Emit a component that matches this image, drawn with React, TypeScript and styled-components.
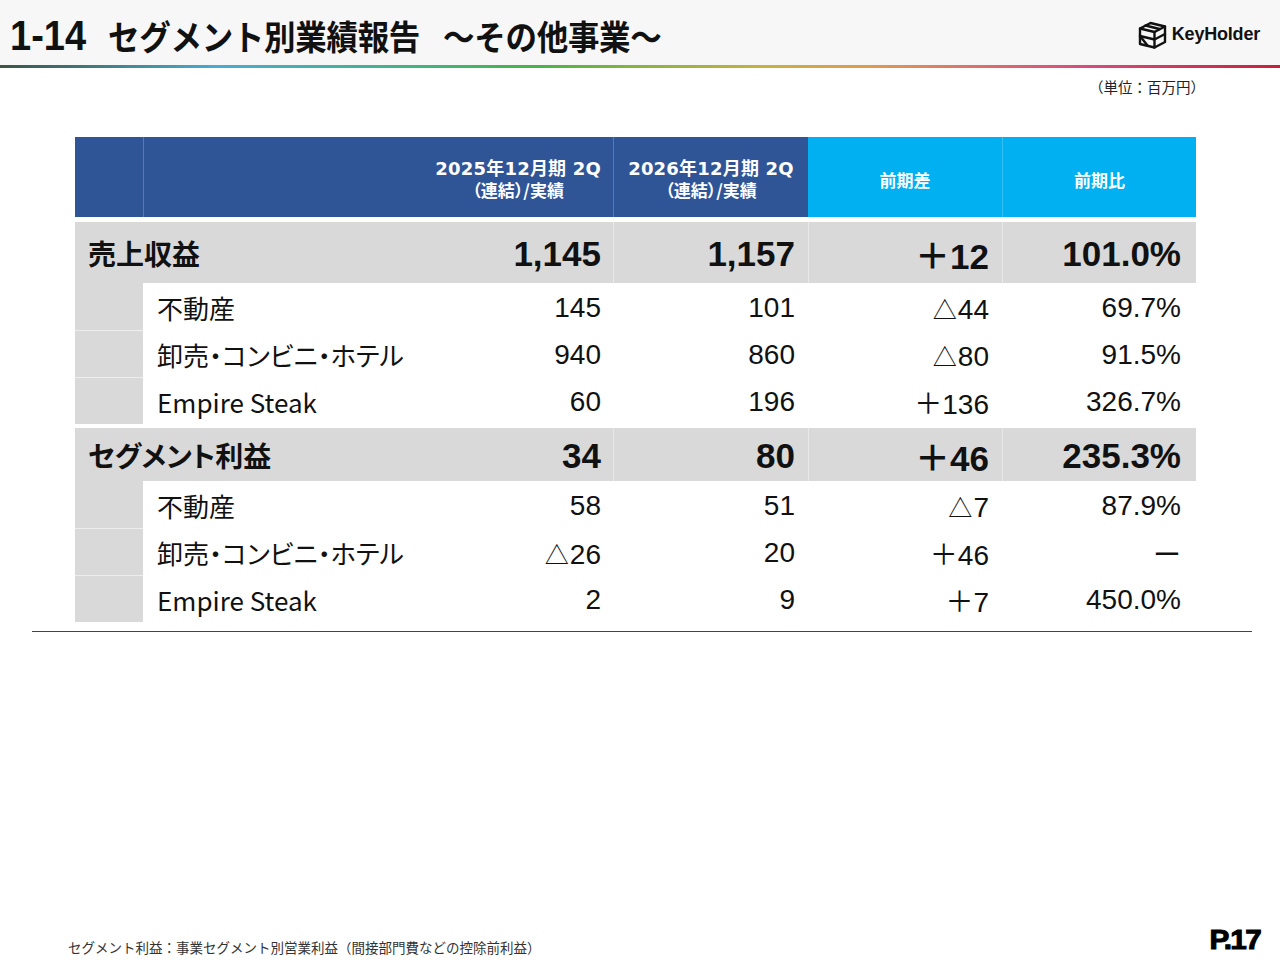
import React from "react";
import styled, { createGlobalStyle } from "styled-components";

const GlobalStyle = createGlobalStyle`
  html, body { margin: 0; padding: 0; background: #ffffff; }
  body { font-family: "Noto Sans CJK JP", "Noto Sans", sans-serif; color: #000; }
  * { box-sizing: border-box; }
`;

const COLS = "68px 470px 195px 194px 194px";
const NUM_FONT = `"Liberation Sans", Arial, "Noto Sans CJK JP", sans-serif`;
const JP_FONT = `"Noto Sans CJK JP", "Noto Sans", sans-serif`;

const Page = styled.div`
  width: 1280px;
  height: 960px;
  display: flex;
  flex-direction: column;
  background: #ffffff;
  overflow: hidden;
`;

const Header = styled.header`
  height: 65px;
  background: #f7f7f7;
  display: flex;
  align-items: center;
  justify-content: space-between;
  padding: 0 20px 0 10px;
`;

const Title = styled.h1`
  margin: 0;
  display: flex;
  align-items: baseline;
  font-family: ${JP_FONT};
  font-weight: 700;
  font-size: 31.5px;
  letter-spacing: -0.3px;
  line-height: 1;
  padding-top: 4px;
  white-space: pre;
  color: #111;
  transform: scaleY(1.1);
  transform-origin: left center;
`;

const TitleNum = styled.span`
  font-family: ${NUM_FONT};
  font-size: 38px;
  letter-spacing: 0;
  margin-right: 22px;
`;

const TitleSub = styled.span`
  margin-left: 23px;
`;

const Logo = styled.div`
  display: flex;
  align-items: center;
  gap: 4px;
  padding-top: 4px;
`;

const LogoText = styled.span`
  font-family: ${NUM_FONT};
  font-weight: 700;
  font-size: 18px;
  letter-spacing: -0.2px;
  color: #111;
`;

const GradientBar = styled.div`
  height: 3px;
  background: linear-gradient(
    to right,
    #3b5545 0%,
    #47acd2 17%,
    #3fb3a0 27%,
    #46b446 42%,
    #8ab43e 50%,
    #c9b040 60%,
    #e09a50 68%,
    #e0706a 76%,
    #d94a7c 85%,
    #c8203a 100%
  );
`;

const Content = styled.main`
  display: flex;
  flex-direction: column;
  padding: 0 28px 0 32px;
`;

const Unit = styled.div`
  align-self: flex-end;
  margin: 10px 47px 0 0;
  font-family: ${JP_FONT};
  font-size: 14.5px;
  line-height: 18px;
  color: #222;
`;

const Table = styled.div`
  margin: 41px 56px 0 43px;
  display: flex;
  flex-direction: column;
`;

const Row = styled.div<{ $h: number; $gap?: number }>`
  display: grid;
  grid-template-columns: ${COLS};
  height: ${(p) => p.$h}px;
  margin-top: ${(p) => p.$gap ?? 0}px;
`;

const HeadCell = styled.div<{ $tone: "dark" | "light"; $align?: "center" | "end"; $first?: boolean }>`
  background: ${(p) => (p.$tone === "dark" ? "#2f5597" : "#00b0f0")};
  border-left: ${(p) =>
    p.$first ? "none" : p.$tone === "dark" ? "1px solid #5a78b0" : "1px solid #33c0f3"};
  color: #ffffff;
  display: flex;
  flex-direction: column;
  align-items: ${(p) => (p.$align === "end" ? "flex-end" : "center")};
  justify-content: center;
  padding: 5px ${(p) => (p.$align === "end" ? "12px" : "0")} 0 0;
  font-family: ${JP_FONT};
  font-weight: 700;
  font-size: 17px;
  line-height: 20px;
  text-align: center;
  font-feature-settings: "palt";
`;

const HeadStack = styled.div`
  display: flex;
  flex-direction: column;
  align-items: center;
  gap: 1px;
  margin-top: -2px;
`;

const HeadDate = styled.span`
  display: block;
  font-family: "DejaVu Sans", "Noto Sans CJK JP", sans-serif;
  font-size: 18px;
  line-height: 20px;
  letter-spacing: 0.2px;
`;

const HeadSub = styled.span`
  display: block;
  font-size: 17px;
  line-height: 19px;
`;

const MainCell = styled.div<{ $pr: number; $lead?: boolean }>`
  grid-column: ${(p) => (p.$lead ? "span 2" : "auto")};
  background: #d9d9d9;
  border-left: ${(p) => (p.$lead ? "none" : "1px solid #e8e8e8")};
  display: flex;
  align-items: center;
  justify-content: ${(p) => (p.$lead ? "space-between" : "flex-end")};
  padding: 2px ${(p) => p.$pr}px 0 ${(p) => (p.$lead ? 13 : 0)}px;
`;

const MainLabel = styled.span`
  font-family: ${JP_FONT};
  font-weight: 700;
  font-size: 28px;
  color: #111;
  font-feature-settings: "palt";
  margin-top: -2px;
`;

const MainNum = styled.span`
  font-family: ${NUM_FONT};
  font-weight: 700;
  font-size: 35px;
  color: #111;
`;

const Stub = styled.div<{ $first?: boolean }>`
  background: #d9d9d9;
  border-top: ${(p) => (p.$first ? "none" : "1px solid #ededed")};
`;

const SubCell = styled.div<{ $pr: number; $lead?: boolean }>`
  display: flex;
  align-items: center;
  justify-content: ${(p) => (p.$lead ? "space-between" : "flex-end")};
  padding: 3px ${(p) => p.$pr}px 0 ${(p) => (p.$lead ? 14 : 0)}px;
`;

const SubLabel = styled.span`
  font-family: ${JP_FONT};
  font-size: 26px;
  color: #111;
  font-feature-settings: "palt";
  margin-top: -2px;
`;

const SubNum = styled.span`
  font-family: ${NUM_FONT};
  font-size: 28px;
  color: #111;
`;

const Tri = styled.span`
  font-size: 0.86em;
  margin-right: 1px;
`;

const Rule = styled.div`
  margin-top: 9px;
  height: 1px;
  background: #444;
`;

const Footer = styled.footer`
  margin-top: auto;
  display: flex;
  align-items: flex-end;
  justify-content: space-between;
  padding: 0 20px 6px 68px;
`;

const Note = styled.div`
  font-family: ${JP_FONT};
  font-size: 13.5px;
  color: #333;
  margin-bottom: -3px;
`;

const PageNo = styled.div`
  font-family: ${NUM_FONT};
  font-weight: 900;
  font-size: 27px;
  line-height: 1;
  letter-spacing: -1.5px;
  color: #000;
  -webkit-text-stroke: 1px #000;
  transform: scaleX(1.1);
  transform-origin: right bottom;
`;

const PR = [12, 13, 13, 15];

const Value = ({ v }: { v: string }) =>
  v.startsWith("△") ? (
    <>
      <Tri>△</Tri>
      {v.slice(1)}
    </>
  ) : (
    <>{v}</>
  );

type Line = { label: string; v: string[] };
type Block = { title: string; values: string[]; h: number; gap: number; lines: Line[] };

const blocks: Block[] = [
  {
    title: "売上収益",
    values: ["1,145", "1,157", "＋12", "101.0%"],
    h: 61,
    gap: 5,
    lines: [
      { label: "不動産", v: ["145", "101", "△44", "69.7%"] },
      { label: "卸売・コンビニ・ホテル", v: ["940", "860", "△80", "91.5%"] },
      { label: "Empire Steak", v: ["60", "196", "＋136", "326.7%"] },
    ],
  },
  {
    title: "セグメント利益",
    values: ["34", "80", "＋46", "235.3%"],
    h: 53,
    gap: 4,
    lines: [
      { label: "不動産", v: ["58", "51", "△7", "87.9%"] },
      { label: "卸売・コンビニ・ホテル", v: ["△26", "20", "＋46", "ー"] },
      { label: "Empire Steak", v: ["2", "9", "＋7", "450.0%"] },
    ],
  },
];

const LogoMark = () => (
  <svg width="31" height="30" viewBox="0 0 30 30" fill="none" stroke="#111" strokeWidth="2.4" strokeLinejoin="round" strokeLinecap="round">
    <path d="M2.5 8.5 L13 3 L27.5 6.5 L27.5 22 L17 27.5 L2.5 24 Z" />
    <path d="M2.5 8.5 L17 12 L27.5 6.5" />
    <path d="M17 12 L17 27.5" />
    <path d="M2.5 16 L17 19.5 L27.5 14" />
    <path d="M2.5 16 L10 25.5" />
    <path d="M8 5.5 L22 9" />
  </svg>
);

const HeadLabel = ({ year }: { year: string }) => (
  <HeadStack>
    <HeadDate>{year}</HeadDate>
    <HeadSub>（連結）/実績</HeadSub>
  </HeadStack>
);

export default function App() {
  return (
    <Page>
      <GlobalStyle />
      <Header>
        <Title>
          <TitleNum>1-14</TitleNum>
          <span>セグメント別業績報告</span>
          <TitleSub>～その他事業～</TitleSub>
        </Title>
        <Logo>
          <LogoMark />
          <LogoText>KeyHolder</LogoText>
        </Logo>
      </Header>
      <GradientBar />
      <Content>
        <Unit>（単位：百万円）</Unit>
        <Table>
          <Row $h={80}>
            <HeadCell $tone="dark" $first />
            <HeadCell $tone="dark" $align="end">
              <HeadLabel year="2025年12月期 2Q" />
            </HeadCell>
            <HeadCell $tone="dark">
              <HeadLabel year="2026年12月期 2Q" />
            </HeadCell>
            <HeadCell $tone="light" $first>前期差</HeadCell>
            <HeadCell $tone="light">前期比</HeadCell>
          </Row>
          {blocks.map((b) => (
            <React.Fragment key={b.title}>
              <Row $h={b.h} $gap={b.gap}>
                <MainCell $lead $pr={PR[0]}>
                  <MainLabel>{b.title}</MainLabel>
                  <MainNum>{b.values[0]}</MainNum>
                </MainCell>
                {b.values.slice(1).map((v, i) => (
                  <MainCell key={i} $pr={PR[i + 1]}>
                    <MainNum>{v}</MainNum>
                  </MainCell>
                ))}
              </Row>
              {b.lines.map((l, idx) => (
                <Row $h={47} key={l.label}>
                  <Stub $first={idx === 0} />
                  <SubCell $lead $pr={PR[0]}>
                    <SubLabel>{l.label}</SubLabel>
                    <SubNum>
                      <Value v={l.v[0]} />
                    </SubNum>
                  </SubCell>
                  {l.v.slice(1).map((v, i) => (
                    <SubCell key={i} $pr={PR[i + 1]}>
                      <SubNum>
                        <Value v={v} />
                      </SubNum>
                    </SubCell>
                  ))}
                </Row>
              ))}
            </React.Fragment>
          ))}
        </Table>
        <Rule />
      </Content>
      <Footer>
        <Note>セグメント利益：事業セグメント別営業利益（間接部門費などの控除前利益）</Note>
        <PageNo>P.17</PageNo>
      </Footer>
    </Page>
  );
}
